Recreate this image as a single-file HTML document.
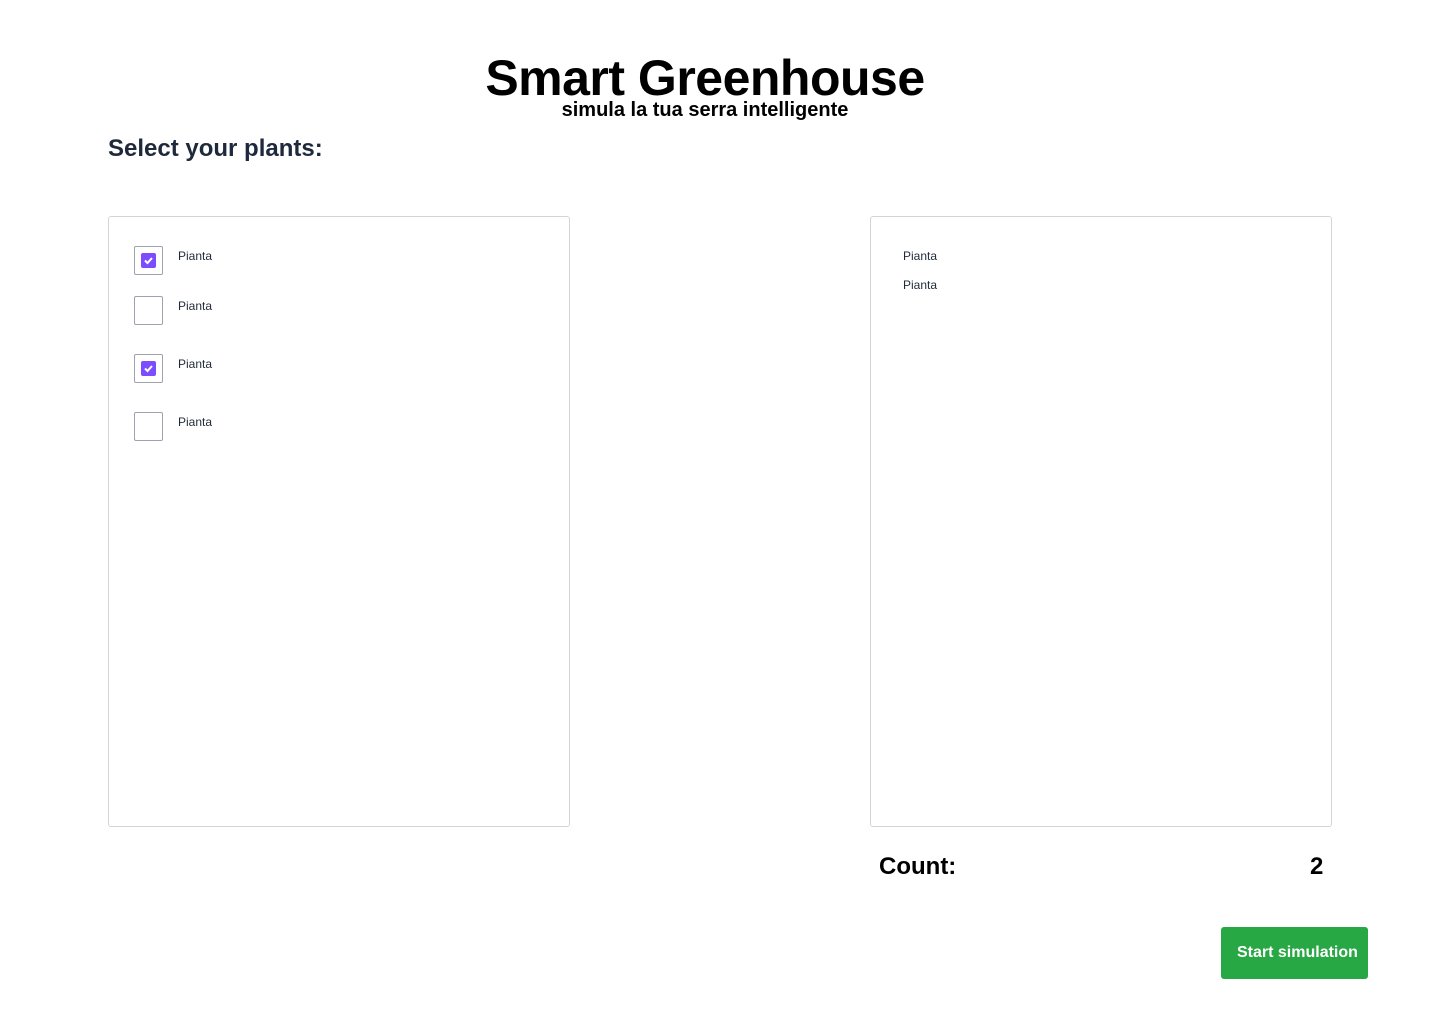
<!DOCTYPE html>
<html><head><style>
body{margin:0;width:1440px;height:1024px;background:#fff;font-family:"Liberation Sans",sans-serif;position:relative;overflow:hidden}
.a{position:absolute}
.box{position:absolute;top:216px;width:460px;height:609px;border:1px solid #d1d5db;border-radius:3px}
.cb{position:absolute;left:134px;width:29px;height:29px;border:1px solid #9ca3af;border-radius:2px;box-sizing:border-box}
.cb.on::after{content:"";position:absolute;left:6px;top:6px;width:15px;height:15px;background:#7c4dff;border-radius:2px}
.cb.on svg{position:absolute;left:8px;top:8px;z-index:1}
.t{position:absolute;font-size:12px;color:#1f2937}
</style></head><body>
<div class="a" style="left:0;width:1410px;top:49px;text-align:center;font-size:50px;font-weight:bold;letter-spacing:-0.5px">Smart Greenhouse</div>
<div class="a" style="left:0;width:1410px;top:99px;text-align:center;font-size:20px;font-weight:bold">simula la tua serra intelligente</div>
<div class="a" style="left:108px;top:135px;font-size:24px;font-weight:bold;color:#1e293b">Select your plants:</div>
<div class="box" style="left:108px"></div>
<div class="box" style="left:870px"></div>
<div class="cb on" style="top:246px"><svg width="11" height="11" viewBox="0 0 11 11"><path d="M2 5.5l2.5 2.5L9 3" stroke="#fff" stroke-width="2" fill="none"/></svg></div>
<div class="cb" style="top:296px"></div>
<div class="cb on" style="top:354px"><svg width="11" height="11" viewBox="0 0 11 11"><path d="M2 5.5l2.5 2.5L9 3" stroke="#fff" stroke-width="2" fill="none"/></svg></div>
<div class="cb" style="top:412px"></div>
<div class="t" style="left:178px;top:249px">Pianta</div>
<div class="t" style="left:178px;top:299px">Pianta</div>
<div class="t" style="left:178px;top:357px">Pianta</div>
<div class="t" style="left:178px;top:415px">Pianta</div>
<div class="t" style="left:903px;top:249px">Pianta</div>
<div class="t" style="left:903px;top:278px">Pianta</div>
<div class="a" style="left:879px;top:853px;font-size:24px;font-weight:bold">Count:</div>
<div class="a" style="left:1310px;top:853px;font-size:24px;font-weight:bold">2</div>
<div class="a" style="left:1221px;top:927px;width:147px;height:52px;background:#28a745;border-radius:3px;color:#fff;font-size:16px;font-weight:bold;line-height:52px;text-align:left;padding-left:16px;box-sizing:border-box;white-space:nowrap">Start simulation</div>
</body></html>
